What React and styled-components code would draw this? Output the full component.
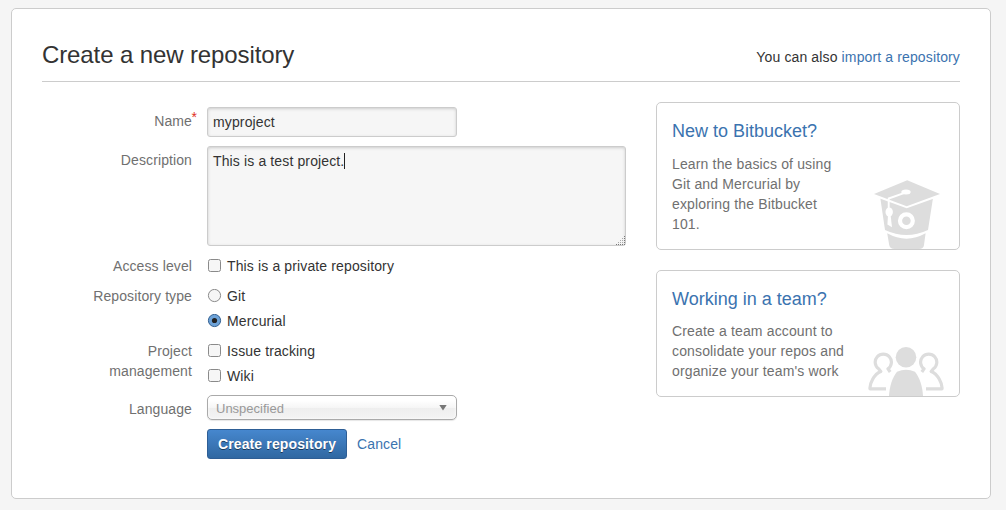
import React from 'react';
import styled, { createGlobalStyle, css } from 'styled-components';

const GlobalStyle = createGlobalStyle`
  * { box-sizing: border-box; }
  body {
    margin: 0;
    background: #f5f5f5;
    color: #333;
    font: 14px/20px "Liberation Sans", Arial, sans-serif;
    letter-spacing: 0.13px;
  }
`;

const Page = styled.div`
  height: 510px;
  padding: 8px 15px 11px 11px;
`;

const Panel = styled.main`
  height: 491px;
  padding: 30px;
  background: #fff;
  border: 1px solid #ccc;
  border-radius: 5px;
`;

const Header = styled.header`
  display: flex;
  justify-content: space-between;
  height: 43px;
  border-bottom: 1px solid #ccc;
`;

const Title = styled.h1`
  margin: 0;
  font-size: 24px;
  font-weight: 400;
  line-height: 32px;
  letter-spacing: -0.11px;
`;

const ImportNote = styled.p`
  margin: 8px 0 0;
`;

const Link = styled.a`
  color: #3b73af;
  text-decoration: none;
`;

const Columns = styled.div`
  display: flex;
  justify-content: space-between;
`;

const Form = styled.form`
  width: 584px;
  padding-top: 25px;
`;

const Row = styled.div`
  display: flex;
  gap: 15px;
  margin-bottom: ${(p) => p.$gap ?? 10}px;
`;

const Label = styled.label`
  width: 150px;
  padding: ${(p) => p.$top ?? 0}px 0 0 40px;
  color: #707070;
  letter-spacing: 0.1px;
  text-align: right;
`;

const Required = styled.span`
  float: right;
  width: 6px;
  height: 20px;
  margin: -4px -6px 0 0;
  color: #e0301e;
  text-align: left;
  text-indent: -0.5px;
`;

const field = css`
  padding: 4px 5px;
  background: #f6f6f6;
  border: 1px solid #ccc;
  border-radius: 3px;
  box-shadow: inset 0 1px 3px #ccc;
  color: #333;
`;

const TextInput = styled.input`
  ${field}
  width: 250px;
  height: 30px;
  font: inherit;
  letter-spacing: inherit;
  outline: none;
`;

const TextArea = styled.div`
  ${field}
  position: relative;
  width: 419px;
  height: 100px;
`;

const Caret = styled.span`
  display: inline-block;
  width: 1px;
  height: 16px;
  background: #222;
  vertical-align: -3px;
`;

const Grip = styled.svg`
  position: absolute;
  right: 0;
  bottom: 0;
`;

const Choices = styled.div`
  display: flex;
  flex-direction: column;
  gap: 5px;
`;

const Choice = styled.label`
  display: flex;
  gap: 5px;
  height: 20px;
`;

const Mark = styled.svg`
  margin-top: 3px;
`;

const Select = styled.div`
  display: flex;
  align-items: center;
  justify-content: space-between;
  width: 250px;
  height: 25px;
  padding: 2px 9px 0 8px;
  border: 1px solid #aaa;
  border-radius: 5px;
  background: linear-gradient(#fff 20%, #f6f6f6 50%, #eee 52%, #f4f4f4 100%);
  box-shadow: inset 0 0 3px #fff, 0 1px 1px rgba(0, 0, 0, 0.1);
  color: #999;
  font-size: 13px;
  letter-spacing: 0;
`;

const Arrow = styled.svg`
  margin-top: -2px;
`;

const Actions = styled.div`
  display: flex;
  align-items: center;
  gap: 10px;
  padding-left: 165px;
`;

const SubmitButton = styled.button`
  width: 140px;
  height: 30px;
  padding: 0;
  border: 1px solid #2e5e95;
  border-radius: 3px;
  background: linear-gradient(#4687ce, #3068a2);
  color: #fff;
  font: bold 14px/20px "Liberation Sans", Arial, sans-serif;
  letter-spacing: 0.13px;
  text-shadow: 0 1px 0 rgba(0, 0, 0, 0.5);
`;

const Sidebar = styled.aside`
  display: flex;
  flex-direction: column;
  gap: 20px;
  width: 304px;
  padding-top: 20px;
`;

const Card = styled.section`
  position: relative;
  height: ${(p) => p.$height}px;
  padding: 18px 15px;
  border: 1px solid #ccc;
  border-radius: 5px;
`;

const CardTitle = styled.h2`
  margin: 0 0 ${(p) => p.$gap}px;
  color: #3b73af;
  font-size: 18px;
  font-weight: 400;
  line-height: 20px;
  letter-spacing: 0;
`;

const CardText = styled.p`
  width: 174px;
  margin: 0;
  color: #707070;
  letter-spacing: 0.15px;
`;

const CardArt = styled.svg`
  position: absolute;
  right: ${(p) => p.$right}px;
  bottom: 0;
`;

const Checkbox = () => (
  <Mark width="15" height="14" viewBox="0 0 15 14">
    <rect x="1.5" y="0.5" width="12" height="12" rx="2" fill="#f6f6f6" stroke="#8a8a8a" />
  </Mark>
);

const Radio = ({ checked }) => (
  <Mark width="15" height="14" viewBox="0 0 15 14">
    <circle cx="7.5" cy="6.5" r="6.1" fill={checked ? '#6ea3d8' : '#f6f6f6'} stroke={checked ? '#315f91' : '#8a8a8a'} />
    {checked && <circle cx="7.5" cy="6.5" r="2.6" fill="#222" />}
  </Mark>
);

const gripDots = [0, 2, 4, 6, 8].flatMap((y) =>
  [0, 2, 4, 6, 8].filter((x) => x + y >= 8).map((x) => ({ x, y, edge: x === 8 || y === 8 }))
);

const GraduateBucket = () => (
  <CardArt $right={18} width="68" height="70" viewBox="0 0 68 70" fill="#ddd">
    <path d="M7.3 19 L33.7 28 L60 19 L55 51 Q33.5 61 12 51 Z" />
    <path d="M14.2 54.3 Q33.5 65 52.6 54.3 L51 66 Q50.5 70 46 70 H21.5 Q17 70 16.2 66 Z" />
    <circle cx="33.4" cy="41.7" r="6.4" fill="none" stroke="#fff" strokeWidth="4.2" />
    <path d="M1 16.3 L33.7 28.3 L67 16.3" fill="none" stroke="#fff" strokeWidth="1.8" />
    <path d="M1 15 L34.2 1.2 L67 15 L33.7 27.2 Z" />
    <path d="M33 13.3 L15.7 19.5 V30" fill="none" stroke="#fff" strokeWidth="1.9" />
    <g fill="#fff">
      <ellipse cx="33" cy="13" rx="4.7" ry="2.5" />
      <ellipse cx="16.2" cy="33" rx="3.7" ry="4.6" />
      <path d="M15 36 L14.4 45.5 L19 48.2 L17.6 36 Z" />
    </g>
  </CardArt>
);

const memberOutline = 'M22.2 26 L20 22.8 A8.1 8.1 0 1 0 10.6 22.8 L12.8 25.5 C6 28 1.5 38 2 42.8 H18';

const Team = () => (
  <CardArt $right={15} width="76" height="50" viewBox="0 0 76 50">
    <g fill="none" stroke="#ddd" strokeWidth="3.2" strokeLinejoin="round">
      <path d={memberOutline} />
      <path d={memberOutline} transform="translate(76 0) scale(-1 1)" />
    </g>
    <circle cx="38" cy="11.2" r="10.3" fill="#ddd" />
    <path d="M29 25.8 Q38 21.5 47 25.8 C52 32 54.5 41 55 50 H21 C21.5 41 24 32 29 25.8 Z" fill="#ddd" />
  </CardArt>
);

export default function App() {
  return (
    <>
      <GlobalStyle />
      <Page>
        <Panel>
          <Header>
            <Title>Create a new repository</Title>
            <ImportNote>You can also <Link>import a repository</Link></ImportNote>
          </Header>
          <Columns>
            <Form>
              <Row $gap={9}>
                <Label $top={4}><Required>*</Required>Name</Label>
                <TextInput defaultValue="myproject" />
              </Row>
              <Row>
                <Label $top={4}>Description</Label>
                <TextArea>
                  This is a test project.<Caret />
                  <Grip width="9" height="9" shapeRendering="crispEdges">
                    {gripDots.map(({ x, y, edge }) => (
                      <rect key={`${x}-${y}`} x={x} y={y} width="1" height="1" fill={edge ? '#777' : '#aaa'} />
                    ))}
                  </Grip>
                </TextArea>
              </Row>
              <Row>
                <Label>Access level</Label>
                <Choice><Checkbox />This is a private repository</Choice>
              </Row>
              <Row>
                <Label>Repository type</Label>
                <Choices>
                  <Choice><Radio />Git</Choice>
                  <Choice><Radio checked />Mercurial</Choice>
                </Choices>
              </Row>
              <Row $gap={9}>
                <Label>Project management</Label>
                <Choices>
                  <Choice><Checkbox />Issue tracking</Choice>
                  <Choice><Checkbox />Wiki</Choice>
                </Choices>
              </Row>
              <Row $gap={9}>
                <Label $top={4}>Language</Label>
                <Select>
                  Unspecified
                  <Arrow width="8" height="6"><path d="M0.3 0H7.7L4 5.6Z" fill="#777" /></Arrow>
                </Select>
              </Row>
              <Actions>
                <SubmitButton type="button">Create repository</SubmitButton>
                <Link>Cancel</Link>
              </Actions>
            </Form>
            <Sidebar>
              <Card $height={148}>
                <CardTitle $gap={13}>New to Bitbucket?</CardTitle>
                <CardText>Learn the basics of using Git and Mercurial by exploring the Bitbucket 101.</CardText>
                <GraduateBucket />
              </Card>
              <Card $height={127}>
                <CardTitle $gap={12}>Working in a team?</CardTitle>
                <CardText>Create a team account to consolidate your repos and organize your team's work</CardText>
                <Team />
              </Card>
            </Sidebar>
          </Columns>
        </Panel>
      </Page>
    </>
  );
}
